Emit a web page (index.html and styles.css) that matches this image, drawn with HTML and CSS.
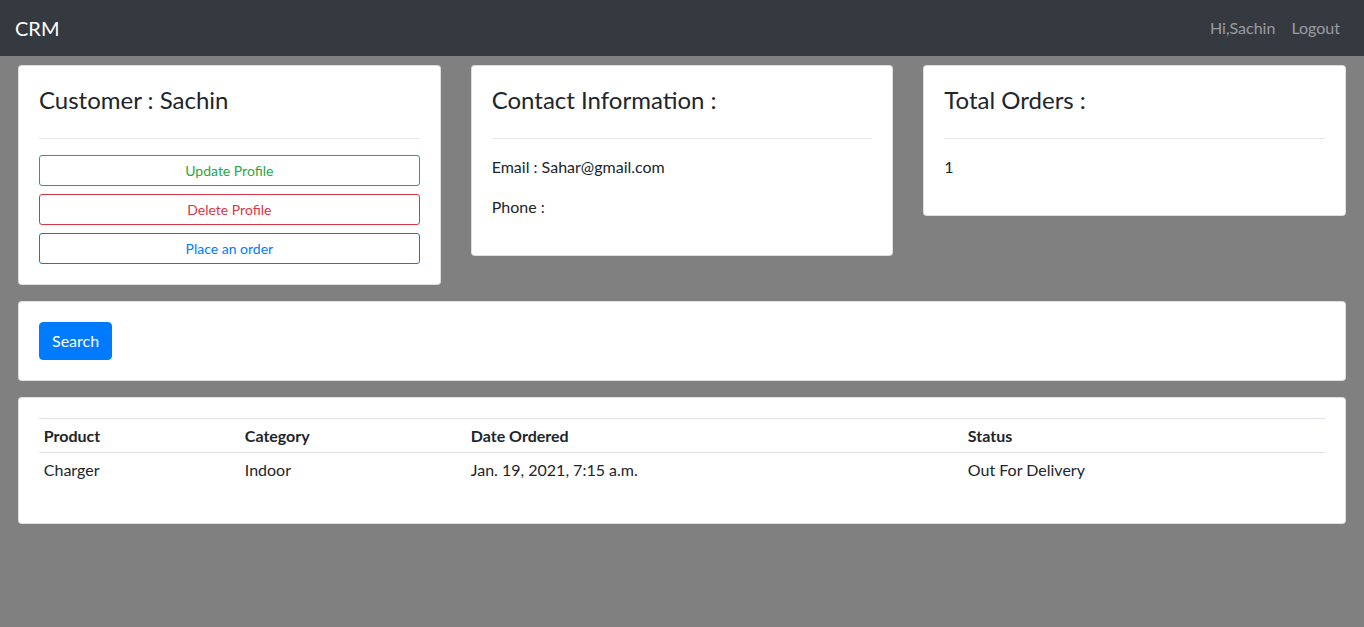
FILE: index.html
```html
<!DOCTYPE html>
<html lang="en">
<head>
<meta charset="utf-8">
<title>CRM</title>
<link rel="stylesheet" href="styles.css">
</head>
<body>
<nav class="navbar">
  <a class="brand" href="#">CRM</a>
  <div class="nav-right">
    <a class="nav-link" href="#">Hi,Sachin</a>
    <a class="nav-link" href="#">Logout</a>
  </div>
</nav>
<main class="page">
  <div class="row">
    <div class="col">
      <div class="card">
        <div class="card-body">
          <h4 class="card-title">Customer : Sachin</h4>
          <hr class="divider">
          <a class="btn btn-sm btn-success" href="#">Update Profile</a>
          <a class="btn btn-sm btn-danger" href="#">Delete Profile</a>
          <a class="btn btn-sm btn-primary" href="#">Place an order</a>
        </div>
      </div>
    </div>
    <div class="col">
      <div class="card">
        <div class="card-body">
          <h4 class="card-title">Contact Information :</h4>
          <hr class="divider">
          <p class="text">Email : Sahar@gmail.com</p>
          <p class="text">Phone : </p>
        </div>
      </div>
    </div>
    <div class="col">
      <div class="card">
        <div class="card-body">
          <h4 class="card-title">Total Orders :</h4>
          <hr class="divider">
          <p class="text">1</p>
        </div>
      </div>
    </div>
  </div>
  <div class="wide">
    <div class="card">
      <div class="card-body">
        <button class="btn-search" type="button">Search</button>
      </div>
    </div>
  </div>
  <div class="wide">
    <div class="card">
      <div class="card-body">
        <table class="table">
          <colgroup>
            <col class="c1"><col class="c2"><col class="c3"><col>
          </colgroup>
          <tbody>
            <tr><th>Product</th><th>Category</th><th>Date Ordered</th><th>Status</th></tr>
            <tr><td>Charger</td><td>Indoor</td><td>Jan. 19, 2021, 7:15 a.m.</td><td>Out For Delivery</td></tr>
          </tbody>
        </table>
      </div>
    </div>
  </div>
</main>
</body>
</html>
```
FILE: styles.css
```css
* { box-sizing: border-box; }
html, body { margin: 0; padding: 0; }
body {
  background: #808080;
  font-family: "Lato", "Open Sans", sans-serif;
  font-size: 16px;
  line-height: 1.5;
  color: #212529;
  height: 627px;
  overflow: hidden;
}
.navbar {
  background: #343a40;
  height: 56px;
  padding: 8px 16px;
  display: flex;
  align-items: center;
  justify-content: space-between;
}
.brand {
  color: #fff;
  font-size: 20px;
  line-height: 30px;
  text-decoration: none;
  margin-left: -1px;
}
.nav-right { display: flex; }
.nav-link {
  color: rgba(255,255,255,.5);
  text-decoration: none;
  padding: 8px;
}
.page { padding: 9px 3px 0; }
.row { display: flex; align-items: flex-start; }
.col { flex: 1 1 0; padding: 0 15px; }
.wide { padding: 16px 15px 0; }
.card {
  background: #fff;
  border: 1px solid rgba(0,0,0,.125);
  border-radius: 4px;
}
.card-body { padding: 20px; }
.card-title {
  margin: 0;
  font-size: 24px;
  font-weight: 400;
  line-height: 28.8px;
}
.divider {
  margin: 23px 0 16px;
  border: 0;
  border-top: 1px solid rgba(0,0,0,.1);
}
.text { margin: 0 0 16px; }
.btn {
  display: block;
  text-align: center;
  text-decoration: none;
  font-size: 14px;
  line-height: 1.5;
  padding: 4px 8px;
  border: 1px solid;
  border-radius: 3px;
  background: transparent;
}
.btn + .btn { margin-top: 8px; }
.btn-success { color: #28a745; border-color: #28a745; }
.btn-danger { color: #dc3545; border-color: #dc3545; }
.btn-primary { color: #007bff; border-color: #007bff; }
.btn-search {
  display: block;
  background: #007bff;
  color: #fff;
  border: 1px solid #007bff;
  border-radius: 4px;
  font: inherit;
  line-height: 24px;
  padding: 6px 12px;
}
.table {
  width: 100%;
  border-collapse: collapse;
  margin-bottom: 16px;
}
.c1 { width: 201px; }
.c2 { width: 226px; }
.c3 { width: 497px; }
.table th, .table td {
  text-align: left;
  padding: 4.8px;
  border-top: 1px solid #dee2e6;
  vertical-align: top;
}
.table th { font-weight: 700; }
```
